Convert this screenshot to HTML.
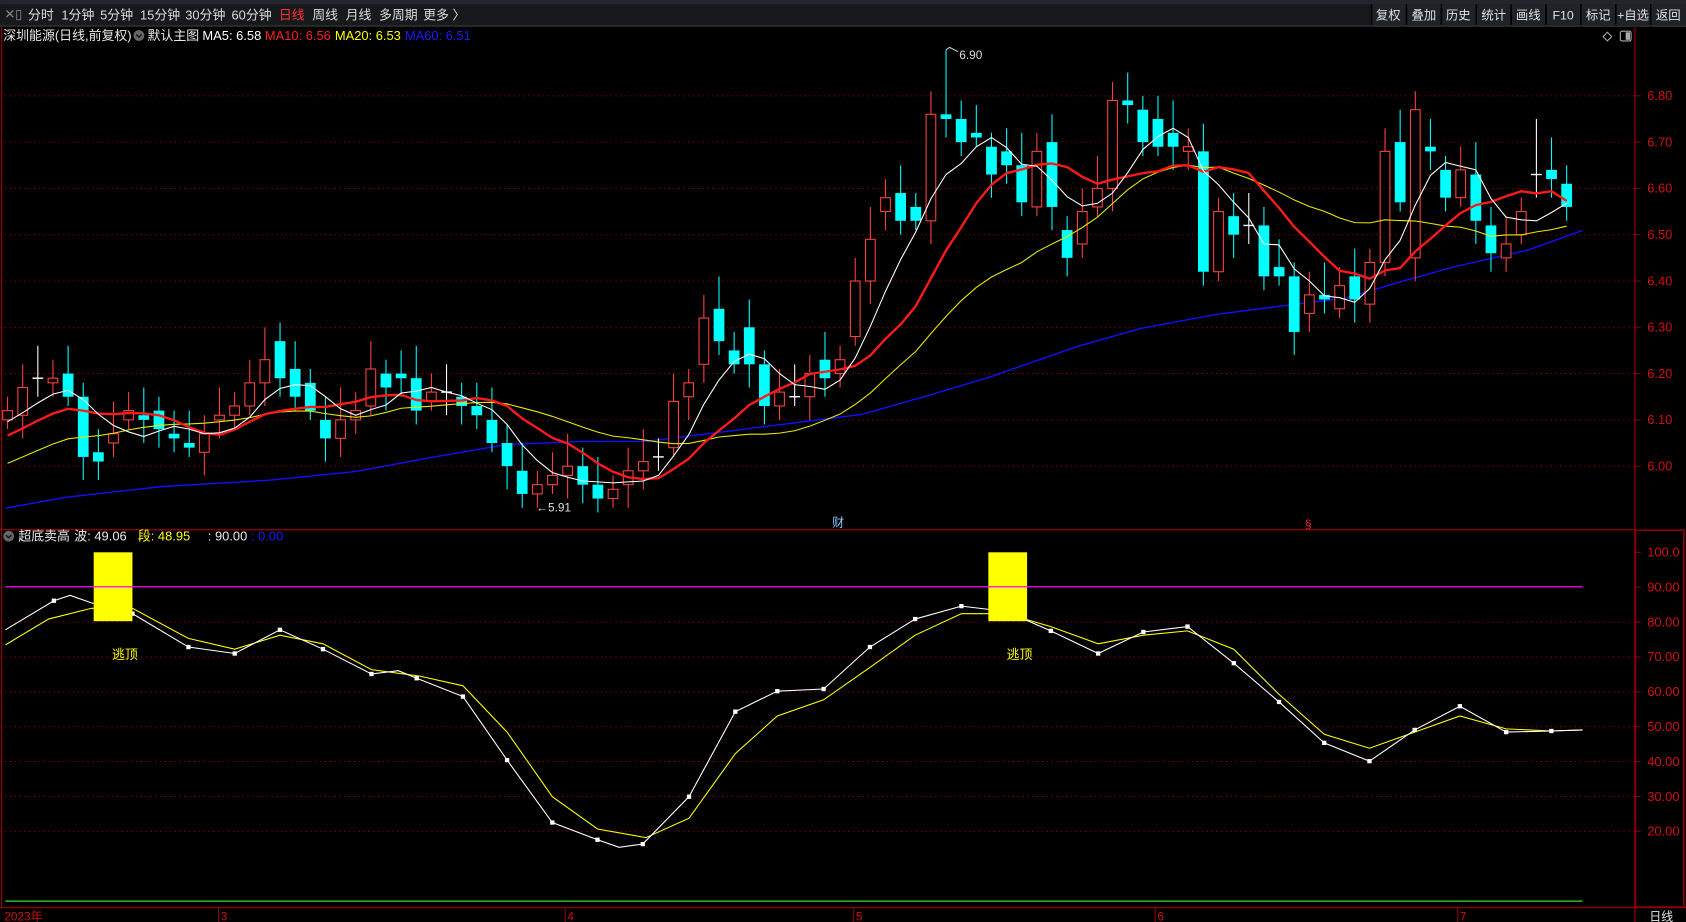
<!DOCTYPE html>
<html><head><meta charset="utf-8">
<style>
html,body{margin:0;padding:0;background:#000;width:1686px;height:922px;overflow:hidden}
svg{display:block}
text{font-family:"Liberation Sans","Noto Sans CJK SC",sans-serif}
</style></head><body>
<svg id="s" width="1686" height="922" viewBox="0 0 1566 856.4" xmlns="http://www.w3.org/2000/svg">
<rect x="0" y="0" width="1566" height="857" fill="#000"/>
<!-- toolbar -->
<rect x="0" y="0" width="1566" height="23" fill="#17191d"/>
<rect x="0" y="0" width="1566" height="4" fill="#22252b"/>
<g font-size="12" fill="#dcdcdc">
<text x="4" y="17" fill="#888">✕▯</text>
<text x="26" y="18">分时</text><text x="57" y="18">1分钟</text><text x="93" y="18">5分钟</text><text x="130" y="18">15分钟</text><text x="172" y="18">30分钟</text><text x="215" y="18">60分钟</text><text x="259" y="18" fill="#ff3030">日线</text><text x="290" y="18">周线</text><text x="321" y="18">月线</text><text x="352" y="18">多周期</text><text x="393" y="18">更多 〉</text>
</g>
<g font-size="11.5" fill="#e0e0e0">
<rect x="1274" y="4" width="292" height="19" fill="#1f2227"/>
<g stroke="#000" stroke-width="1.5">
<line x1="1274" y1="4" x2="1274" y2="23"/><line x1="1306.4" y1="4" x2="1306.4" y2="23"/><line x1="1338.8" y1="4" x2="1338.8" y2="23"/><line x1="1371.2" y1="4" x2="1371.2" y2="23"/><line x1="1403.6" y1="4" x2="1403.6" y2="23"/><line x1="1436" y1="4" x2="1436" y2="23"/><line x1="1468.4" y1="4" x2="1468.4" y2="23"/><line x1="1500.8" y1="4" x2="1500.8" y2="23"/><line x1="1533.2" y1="4" x2="1533.2" y2="23"/>
</g>
<text x="1278" y="18">复权</text><text x="1311" y="18">叠加</text><text x="1343" y="18">历史</text><text x="1376" y="18">统计</text><text x="1408" y="18">画线</text><text x="1442" y="18">F10</text><text x="1473" y="18">标记</text><text x="1502" y="18">+自选</text><text x="1538" y="18">返回</text>
</g>
<rect x="0" y="23" width="1566" height="2" fill="#2a2a2a"/>
<!-- title row -->
<g font-size="12">
<text x="3" y="37" fill="#e8e8e8">深圳能源(日线,前复权)</text>
<circle cx="129" cy="33" r="5" fill="#666"/><path d="M126.5 32 L129 34.5 L131.5 32" stroke="#111" fill="none" stroke-width="1.3"/>
<text x="137" y="37" fill="#e8e8e8">默认主图</text>
<text x="188" y="37" fill="#fff">MA5: 6.58</text>
<text x="246" y="37" fill="#ff2020">MA10: 6.56</text>
<text x="311" y="37" fill="#ffff00">MA20: 6.53</text>
<text x="376" y="37" fill="#1a1aff">MA60: 6.51</text>
</g>
<path d="M1493 30 l4 4 l-4 4 l-4 -4z" stroke="#aaa" fill="none"/>
<rect x="1505" y="29" width="10" height="9" rx="1.5" stroke="#aaa" fill="none"/><rect x="1510" y="30" width="4" height="7" fill="#aaa"/>
<!-- axes -->
<g stroke="#8b0000" stroke-width="1.2" fill="none">
<line x1="1518.5" y1="25" x2="1518.5" y2="857"/>
<line x1="0" y1="492" x2="1518" y2="492"/>
<line x1="0" y1="843" x2="1566" y2="843"/>
<rect x="1519" y="492.5" width="45" height="350" stroke-width="1.6"/>
<line x1="1.5" y1="25" x2="1.5" y2="843"/>
</g>
<g id="grid"></g>
<g id="main"></g>
<!-- indicator -->
<g font-size="12">
<circle cx="8" cy="498" r="5" fill="#666"/><path d="M5.5 497 L8 499.5 L10.5 497" stroke="#111" fill="none" stroke-width="1.3"/>
<text x="17" y="502" fill="#e8e8e8">超底卖高</text>
<text x="69" y="502" fill="#e8e8e8">波: 49.06</text>
<text x="128" y="502" fill="#ffff00">段: 48.95</text>
<text x="193" y="502" fill="#e8e8e8">: 90.00</text>
<text x="233" y="502" fill="#1a1aff">: 0.00</text>
</g>
<line x1="5" y1="545" x2="1470" y2="545" stroke="#ff00ff" stroke-width="1.2"/>
<polyline fill="none" stroke="#ffff00" stroke-width="1" points="5,599 45,575 85,565 123,565 175,593 218,603 260,590 300,598 345,622 390,628 430,637 471,680 513,740 555,770 600,778 640,760 683,700 722,665 765,650 808,620 850,590 893,570 935,570 976,582 1020,598 1062,590 1103,586 1146,603 1188,645 1230,682 1272,695 1314,680 1356,665 1399,677 1441,679 1470,678"/>
<polyline id="wl" fill="none" stroke="#fff" stroke-width="1" points="5,585 50,558 65,553 85,560 123,570 175,601 218,607 260,585 300,603 345,626 370,623 387,630 430,647 471,706 513,764 555,780 575,787 597,784 640,740 683,661 722,642 765,640 808,601 850,575 893,563 935,568 976,586 1020,607 1062,587 1103,582 1146,616 1188,652 1230,690 1272,707 1314,678 1356,656 1399,680 1441,679 1470,678"/>
<g fill="#fff">
<rect x="48" y="556" width="4" height="4"/><rect x="121" y="568" width="4" height="4"/><rect x="173" y="599" width="4" height="4"/><rect x="216" y="605" width="4" height="4"/><rect x="258" y="583" width="4" height="4"/><rect x="298" y="601" width="4" height="4"/><rect x="343" y="624" width="4" height="4"/><rect x="385" y="628" width="4" height="4"/><rect x="428" y="645" width="4" height="4"/><rect x="469" y="704" width="4" height="4"/><rect x="511" y="762" width="4" height="4"/><rect x="553" y="778" width="4" height="4"/><rect x="595" y="782" width="4" height="4"/><rect x="638" y="738" width="4" height="4"/><rect x="681" y="659" width="4" height="4"/><rect x="720" y="640" width="4" height="4"/><rect x="763" y="638" width="4" height="4"/><rect x="806" y="599" width="4" height="4"/><rect x="848" y="573" width="4" height="4"/><rect x="891" y="561" width="4" height="4"/><rect x="974" y="584" width="4" height="4"/><rect x="1018" y="605" width="4" height="4"/><rect x="1060" y="585" width="4" height="4"/><rect x="1101" y="580" width="4" height="4"/><rect x="1144" y="614" width="4" height="4"/><rect x="1186" y="650" width="4" height="4"/><rect x="1228" y="688" width="4" height="4"/><rect x="1270" y="705" width="4" height="4"/><rect x="1312" y="676" width="4" height="4"/><rect x="1354" y="654" width="4" height="4"/><rect x="1397" y="678" width="4" height="4"/><rect x="1439" y="677" width="4" height="4"/>
</g>
<rect x="87" y="513" width="36" height="64" fill="#ffff00"/>
<rect x="918" y="513" width="36" height="64" fill="#ffff00"/>
<line x1="87" y1="545" x2="123" y2="545" stroke="#ff00ff" stroke-width="1.2"/>
<line x1="918" y1="545" x2="954" y2="545" stroke="#ff00ff" stroke-width="1.2"/>
<text x="104" y="612" font-size="12" fill="#ffff00">逃顶</text>
<text x="935" y="612" font-size="12" fill="#ffff00">逃顶</text>
<line x1="5" y1="837" x2="1470" y2="837" stroke="#33dd33" stroke-width="1.2"/>
<!-- bottom dates -->
<g font-size="11" fill="#cc1111">
<text x="4" y="855">2023年</text>
<line x1="203" y1="843" x2="203" y2="857" stroke="#8b0000"/><text x="205" y="855">3</text>
<line x1="525" y1="843" x2="525" y2="857" stroke="#8b0000"/><text x="527" y="855">4</text>
<line x1="793" y1="843" x2="793" y2="857" stroke="#8b0000"/><text x="795" y="855">5</text>
<line x1="1073" y1="843" x2="1073" y2="857" stroke="#8b0000"/><text x="1075" y="855">6</text>
<line x1="1354" y1="843" x2="1354" y2="857" stroke="#8b0000"/><text x="1356" y="855">7</text>
</g>
<text x="1532" y="855" font-size="11" fill="#e8e8e8">日线</text>
<!-- annotations -->
<g font-size="11" fill="#ddd">
<path d="M879 46 l3 -2 l8 4" stroke="#ccc" fill="none"/><text x="891" y="55">6.90</text>
<text x="498" y="475">←5.91</text>
</g>
<text x="773" y="489" font-size="11" fill="#88ccff">财</text>
<text x="1212" y="491" font-size="11" fill="#ff2020">§</text>
</svg>
<script>
(function(){
var NS="http://www.w3.org/2000/svg";
function el(p,t,a){var e=document.createElementNS(NS,t);for(var k in a)e.setAttribute(k,a[k]);p.appendChild(e);return e;}
var grid=document.getElementById('grid'),main=document.getElementById('main');
var prices=["6.80","6.70","6.60","6.50","6.40","6.30","6.20","6.10","6.00"];
for(var i=0;i<9;i++){var y=89+i*43;
 el(grid,'line',{x1:0,y1:y,x2:1518,y2:y,stroke:'#6a0000','stroke-dasharray':'1.5 3','stroke-width':1});
 el(grid,'line',{x1:1519,y1:y,x2:1524,y2:y,stroke:'#8b0000'});
 var t=el(grid,'text',{x:1530,y:y+4,'font-size':'12',fill:'#d01010'});t.textContent=prices[i];}
var ind=["100.0","90.00","80.00","70.00","60.00","50.00","40.00","30.00","20.00"];
for(var i=0;i<9;i++){var y=513+i*32.4;
 if(i>1)el(grid,'line',{x1:0,y1:y,x2:1518,y2:y,stroke:'#6a0000','stroke-dasharray':'1.5 3','stroke-width':1});
 el(grid,'line',{x1:1519,y1:y,x2:1524,y2:y,stroke:'#8b0000'});
 var t=el(grid,'text',{x:1530,y:y+4,'font-size':'12',fill:'#d01010'});t.textContent=ind[i];}
var d=[[6.10,6.12],[6.11,6.17],[6.19,6.19],[6.18,6.19],[6.20,6.15],[6.15,6.02],[6.03,6.01],[6.05,6.07],[6.10,6.12],[6.11,6.10],[6.12,6.08],[6.07,6.06],[6.05,6.04],[6.03,6.07],[6.10,6.11],[6.11,6.13],[6.13,6.18],[6.18,6.23],[6.27,6.19],[6.21,6.15],[6.18,6.12],[6.10,6.06],[6.06,6.10],[6.10,6.12],[6.13,6.21],[6.20,6.17],[6.20,6.19],[6.19,6.12],[6.14,6.16],[6.16,6.16],[6.15,6.13],[6.13,6.11],[6.10,6.05],[6.05,6.00],[5.99,5.94],[5.94,5.96],[5.96,5.98],[5.98,6.00],[6.00,5.96],[5.96,5.93],[5.93,5.95],[5.96,5.99],[5.99,6.01],[6.02,6.02],[6.04,6.14],[6.15,6.18],[6.22,6.32],[6.34,6.27],[6.25,6.22],[6.30,6.22],[6.22,6.13],[6.13,6.16],[6.15,6.15],[6.15,6.20],[6.23,6.19],[6.20,6.23],[6.28,6.40],[6.40,6.49],[6.55,6.58],[6.59,6.53],[6.56,6.53],[6.53,6.76],[6.76,6.75],[6.75,6.70],[6.72,6.71],[6.69,6.63],[6.68,6.65],[6.65,6.57],[6.56,6.68],[6.70,6.56],[6.51,6.45],[6.48,6.55],[6.56,6.60],[6.60,6.79],[6.79,6.78],[6.77,6.70],[6.75,6.69],[6.72,6.69],[6.68,6.69],[6.68,6.42],[6.42,6.55],[6.54,6.50],[6.52,6.52],[6.52,6.41],[6.43,6.41],[6.41,6.29],[6.33,6.37],[6.37,6.36],[6.34,6.39],[6.41,6.36],[6.35,6.44],[6.44,6.68],[6.70,6.57],[6.45,6.77],[6.69,6.68],[6.64,6.58],[6.58,6.64],[6.63,6.53],[6.52,6.46],[6.45,6.48],[6.50,6.55],[6.63,6.63],[6.64,6.62],[6.61,6.56]];
function Y(p){return 89+(6.80-p)*430;}
function X(i){return 7+i*14.06;}
el(main,'polyline',{fill:'none',stroke:'#1010ff','stroke-width':1.3,points:'5,472 60,462 150,452 250,446 330,438 400,425 470,413 540,410 600,410 680,400 760,390 800,385 860,368 920,350 1000,322 1060,305 1130,292 1200,283 1250,277 1300,262 1350,248 1420,232 1470,214'});
var cl=d.map(function(a){return a[1];});
for(var i=0;i<d.length;i++){
 var o=d[i][0],c=d[i][1],x=X(i),top=Math.max(o,c),bot=Math.min(o,c);
 var h=top+0.03+((i*7)%5)*0.01,l=bot-0.02-((i*3)%4)*0.01;
 if(i===62)h=6.90; if(i===101)h=6.75; if(i===34)l=5.91;
 var col=c>o?'#ff4040':(c<o?'#00ffff':'#ffffff');
 el(main,'line',{x1:x,y1:Y(h),x2:x,y2:Y(l),stroke:col,'stroke-width':1});
 if(c===o){el(main,'line',{x1:x-5,y1:Y(c),x2:x+5,y2:Y(c),stroke:'#fff','stroke-width':1.3});}
 else if(c>o){el(main,'rect',{x:x-4.5,y:Y(top),width:9,height:Math.max(1,Y(bot)-Y(top)),fill:'#000',stroke:col,'stroke-width':1});}
 else{el(main,'rect',{x:x-5,y:Y(top),width:10,height:Math.max(2,Y(bot)-Y(top)),fill:col});}
}
var pre=[];for(var k=0;k<20;k++)pre.push(5.88+k*0.012);
var all=pre.concat(cl);
function ma(n,color,w){var pts=[];for(var i=0;i<cl.length;i++){var j=i+20,s=0;for(var k=0;k<n;k++)s+=all[j-k];pts.push(X(i).toFixed(1)+','+Y(s/n).toFixed(1));}
 el(main,'polyline',{fill:'none',stroke:color,'stroke-width':w,points:pts.join(' ')});}
ma(20,'#e8e800',1);ma(10,'#ff1a1a',2.2);ma(5,'#ffffff',1);
})();
</script>
</body></html>
